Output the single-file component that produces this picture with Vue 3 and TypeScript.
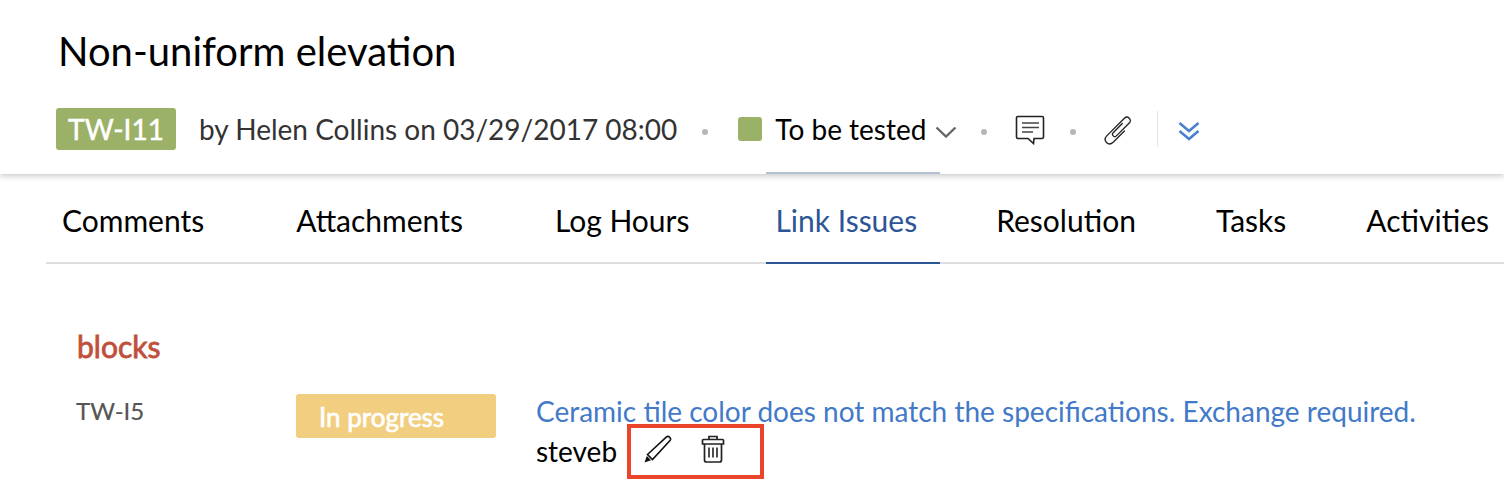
<template>
  <div class="page">
    <header class="head">
      <h1 class="title">Non-uniform elevation</h1>
      <div class="meta">
        <span class="issue-id">TW-I11</span>
        <span class="by">by Helen Collins on 03/29/2017 08:00</span>
        <i class="dot first"></i>
        <span class="swatch"></span>
        <span class="status">To be tested</span>
        <svg class="chev" width="22" height="12" viewBox="0 0 22 12">
          <path d="M1.500 1.500 L11 10.500 L20.500 1.500" fill="none" stroke="#666" stroke-width="2.400" />
        </svg>
        <i class="dot after-chev"></i>
        <svg class="comment" width="30" height="30" viewBox="0 0 30 30">
          <path d="M3 1.500 H27 A1.500 1.500 0 0 1 28.500 3 V22 A1.500 1.500 0 0 1 27 23.500 H19 L18.500 28.500 L13 23.500 H3 A1.500 1.500 0 0 1 1.500 22 V3 A1.500 1.500 0 0 1 3 1.500 Z" fill="none" stroke="#222" stroke-width="1.600" />
          <path d="M7 8 H24 M7 12.500 H24 M7 17 H18" stroke="#444" stroke-width="1.500" />
        </svg>
        <i class="dot after-comment"></i>
        <svg class="clip" width="30" height="30" viewBox="0 0 28 28">
          <path d="M18 8 L9.500 16.500 C7.500 18.500 10.500 21.500 12.500 19.500 L24.500 7.500 C27.500 4.500 23 0 20 3 L3.500 19.500 C-0.500 24 5 29.500 9.500 25.500 L20 15" fill="none" stroke="#222" stroke-width="1.250" stroke-linecap="round" />
        </svg>
        <i class="rule"></i>
        <svg class="expand" width="22" height="22" viewBox="0 0 22 22">
          <path d="M1.500 3 L11 11 L20.500 3 M1.500 11 L11 19 L20.500 11" fill="none" stroke="#4a80d0" stroke-width="2.600" />
        </svg>
      </div>
    </header>

    <nav class="tabs">
      <a v-for="t in tabs" :key="t" class="tab" :class="{ active: t === 'Link Issues' }">{{ t }}</a>
    </nav>

    <section class="links">
      <h2 class="kind">blocks</h2>
      <div class="row">
        <span class="ref">TW-I5</span>
        <span class="badge">In progress</span>
        <div class="detail">
          <a class="summary">Ceramic tile color does not match the specifications. Exchange required.</a>
          <div class="owner-line">
            <span class="owner">steveb</span>
            <div class="actions">
              <svg width="28" height="28" viewBox="0 0 28 28">
                <path d="M3.500 19.500 L22.500 1.800 C24.500 0.200 27.800 3.500 26 5.500 L8.500 24.500 Z M3.500 19.500 L8.500 24.500" fill="none" stroke="#111" stroke-width="1.600" />
                <path d="M0.500 27.500 L2.800 21 L7 25.200 Z" fill="#111" />
              </svg>
              <svg width="24" height="28" viewBox="0 0 24 28">
                <path d="M1.500 9 H22.500 V5.500 A1 1 0 0 0 21.500 4.500 H2.500 A1 1 0 0 0 1.500 5.500 Z M8 4.500 V1.500 H16 V4.500 M3.500 9 V25 A2 2 0 0 0 5.500 27 H18.500 A2 2 0 0 0 20.500 25 V9" fill="none" stroke="#222" stroke-width="1.700" />
                <path d="M8 12.500 V22.500 M12 12.500 V22.500 M16 12.500 V22.500" stroke="#222" stroke-width="1.600" />
              </svg>
            </div>
          </div>
        </div>
      </div>
    </section>
  </div>
</template>

<script setup lang="ts">
const tabs: string[] = ['Comments', 'Attachments', 'Log Hours', 'Link Issues', 'Resolution', 'Tasks', 'Activities']
</script>

<style>
html, body {
  background: #fff;
  overflow: hidden;
}
</style>

<style scoped>
.page {
  width: 1504px;
  height: 494px;
  overflow: hidden;
  font-family: Lato, "Open Sans", sans-serif;
  color: #000;
}

.head {
  height: 174px;
  box-sizing: border-box;
  padding: 28px 0 0 56px;
  box-shadow: 0 2px 6px rgba(0, 0, 0, 0.22);
  position: relative;
}

.title {
  margin: 0 0 0 2px;
  font-size: 40px;
  line-height: 46px;
  font-weight: 400;
}

.meta {
  display: flex;
  align-items: center;
  height: 42px;
  margin-top: 34px;
}

.issue-id {
  width: 120px;
  height: 42px;
  line-height: 42px;
  border-radius: 3px;
  background: #9bb167;
  color: #fff;
  font-size: 28px;
  -webkit-text-stroke: 0.5px #fff;
  text-align: center;
}

.by {
  margin-left: 23px;
  font-size: 28px;
  color: #333;
  white-space: nowrap;
}

.dot {
  width: 6px;
  height: 6px;
  border-radius: 50%;
  background: #b5b5b5;
  margin-top: 6px;
}

.dot.first {
  margin-left: 25px;
}

.swatch {
  width: 24px;
  height: 24px;
  border-radius: 3px;
  background: #9bb167;
  margin-left: 30px;
}

.status {
  margin-left: 13px;
  font-size: 28px;
  white-space: nowrap;
}

.chev {
  margin: 6px 0 0 9px;
}

.dot.after-chev {
  margin-left: 24px;
}

.comment {
  margin: 2px 0 0 28px;
}

.dot.after-comment {
  margin-left: 25px;
}

.clip {
  margin: 2px 0 0 27px;
}

.rule {
  width: 1px;
  height: 36px;
  background: #e4e4e4;
  margin-left: 24px;
}

.expand {
  margin: 4px 0 0 20px;
}

.tabs {
  display: flex;
  height: 88px;
  margin-left: 46px;
  gap: 60px;
  padding-left: 6px;
  border-bottom: 2px solid #dedede;
}

.tab {
  position: relative;
  padding: 0 10px;
  height: 90px;
  box-sizing: border-box;
  line-height: 92px;
  font-size: 30px;
  white-space: nowrap;
}

/* first three tabs sit a bit wider apart */
.tab:nth-child(1) {
  margin-right: 12px;
}

.tab:nth-child(2) {
  margin-right: 12px;
}

.tab:nth-child(3) {
  margin-right: 6px;
}

.tab.active {
  margin-left: 1px;
  padding-left: 9px;
  padding-right: 23px;
  margin-right: -14px;
  color: #2c5596;
  border-bottom: 2px solid #2c5596;
}

.tab.active::before {
  content: "";
  position: absolute;
  left: 0;
  right: 0;
  top: -2px;
  height: 2px;
  background: #b3c0d2;
}

.links {
  padding: 64px 0 0 77px;
}

.kind {
  margin: 0;
  font-size: 30px;
  line-height: 36px;
  font-weight: 400;
  -webkit-text-stroke: 0.8px #c0503c;
  color: #c0503c;
}

.row {
  display: flex;
  margin-top: 28px;
}

.ref {
  width: 220px;
  margin-left: -1px;
  padding-top: 1px;
  font-size: 24px;
  line-height: 36px;
  color: #555;
  -webkit-text-stroke: 0.2px #555;
}

.badge {
  width: 200px;
  height: 44px;
  margin-top: 2px;
  box-sizing: border-box;
  padding-left: 23px;
  border-radius: 3px;
  background: #f2ce80;
  color: #fff;
  font-size: 26px;
  line-height: 46px;
  -webkit-text-stroke: 0.7px #fff;
}

.detail {
  margin-left: 40px;
}

.summary {
  display: block;
  font-size: 28px;
  line-height: 38px;
  color: #4279c8;
  white-space: nowrap;
}

.owner-line {
  display: flex;
  align-items: flex-start;
  margin-top: -6px;
}

.owner {
  font-size: 28px;
  line-height: 38px;
  margin-top: 8px;
}

.actions {
  display: flex;
  align-items: center;
  gap: 29px;
  box-sizing: border-box;
  width: 137px;
  height: 55px;
  margin-left: 10px;
  padding: 0 0 5px 13px;
  border: 4px solid #e8452a;
}
</style>
